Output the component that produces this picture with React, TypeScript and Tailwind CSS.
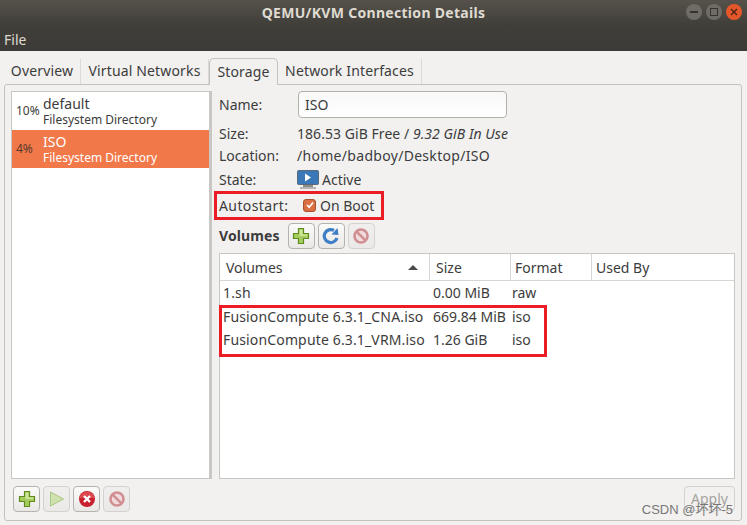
const font = { fontFamily: '"Noto Sans", sans-serif' };

function Plus() {
  return (
    <svg width="18" height="18" viewBox="0 0 18 18">
      <path d="M6.5 1.5h5v5h5v5h-5v5h-5v-5h-5v-5h5z" fill="#a5cc5c" stroke="#5f8a1e" strokeWidth="1.2" />
      <path d="M7.5 2.7h3v4.8h4.8v1.5H7.5z" fill="#cde69a" />
    </svg>
  );
}

function Refresh() {
  return (
    <svg width="18" height="18" viewBox="0 0 18 18">
      <path d="M15 11a6.5 6.5 0 1 1-3-7.6" fill="none" stroke="#3f7fc6" strokeWidth="3.2" />
      <path d="M9.5 7.5 16.5 8 15.5 1z" fill="#3f7fc6" />
    </svg>
  );
}

function Stop() {
  return (
    <svg width="18" height="18" viewBox="0 0 18 18">
      <circle cx="9" cy="9" r="6.5" fill="#f0dcdc" stroke="#d28f92" strokeWidth="2.6" />
      <path d="M4.6 4.6l8.8 8.8" stroke="#d28f92" strokeWidth="2.6" />
    </svg>
  );
}

function Play() {
  return (
    <svg width="18" height="18" viewBox="0 0 18 18">
      <path d="M2.5 2l13 7-13 7z" fill="#cfe2ae" stroke="#a9c784" strokeWidth="1" />
    </svg>
  );
}

function Delete() {
  return (
    <svg width="18" height="18" viewBox="0 0 18 18">
      <circle cx="9" cy="9" r="8" fill="#c8202e" />
      <path d="M1.5 8a7.6 7.6 0 0 1 15 0z" fill="#dc4a50" />
      <path d="M6 6l6 6M12 6l-6 6" stroke="#fff" strokeWidth="2.4" />
    </svg>
  );
}

function ToolButton({ children, dim }: { children: React.ReactNode; dim?: boolean }) {
  return (
    <div
      className={`flex h-[26px] w-[27px] items-center justify-center rounded-[4px] border bg-gradient-to-b ${
        dim ? "border-[#d4d2cf] from-[#f0efee] to-[#eae9e7]" : "border-[#b6b3ae] from-[#fbfbfa] to-[#e9e8e6]"
      }`}
    >
      {children}
    </div>
  );
}

const volumes = [
  { name: "1.sh", size: "0.00 MiB", format: "raw" },
  { name: "FusionCompute 6.3.1_CNA.iso", size: "669.84 MiB", format: "iso" },
  { name: "FusionCompute 6.3.1_VRM.iso", size: "1.26 GiB", format: "iso" },
];

export default function App() {
  return (
    <div style={font} className="relative flex h-[525px] w-[747px] flex-col overflow-hidden bg-[#f2f1f0] text-[14px] text-[#3c3c3c]">
      {/* Title bar + menu */}
      <div className="h-[51px] shrink-0 bg-gradient-to-b from-[#56524b] via-[#403e39] to-[#3d3b37]">
        <div className="relative flex h-[24px] items-center justify-center text-[14px] font-bold tracking-[0.3px] text-[#dfdbd2]">
          QEMU/KVM Connection Details
          <div className="absolute right-[5px] top-[4px] flex gap-[4px]">
            <div className="flex h-[16px] w-[16px] items-center justify-center rounded-full bg-[#6f6c66] text-[#3b3a36]">
              <div className="h-[1.5px] w-[8px] bg-[#35332f]" />
            </div>
            <div className="flex h-[16px] w-[16px] items-center justify-center rounded-full bg-[#6f6c66]">
              <div className="h-[8px] w-[8px] border border-[#35332f]" />
            </div>
            <div className="flex h-[16px] w-[16px] items-center justify-center rounded-full bg-[#e4572a]">
              <svg width="8" height="8" viewBox="0 0 8 8">
                <path d="M1 1l6 6M7 1L1 7" stroke="#4a2414" strokeWidth="1.4" />
              </svg>
            </div>
          </div>
        </div>
        <div className="flex h-[27px] items-center pl-[4px] pt-[4px] text-[#dfdbd2]">File</div>
      </div>

      {/* Tabs */}
      <div className="flex h-[33px] shrink-0 items-end pl-[4px] tracking-[0.15px]">
        <div className="flex h-[25px] w-[77px] items-center justify-center border-r border-[#dcdad7] pb-[2px]">Overview</div>
        <div className="flex h-[25px] w-[128px] items-center justify-center border-r border-[#dcdad7] pb-[2px]">Virtual Networks</div>
        <div className="z-10 -mb-px flex h-[27px] w-[69px] items-center justify-center rounded-t-[5px] border border-b-0 border-[#c4c2bf] bg-[#f2f1f0] pb-[1px]">Storage</div>
        <div className="flex h-[25px] w-[144px] items-center justify-center border-r border-[#dcdad7] pb-[2px]">Network Interfaces</div>
      </div>

      {/* Notebook */}
      <div className="mb-[4px] ml-[4px] mr-[5px] flex flex-1 gap-[7px] rounded-[3px] border border-[#c4c2bf] p-[6px]">
        {/* Pool list */}
        <div className="flex w-[201px] shrink-0 flex-col">
          <div className="h-[388px] border border-r-[3px] border-[#c9c7c4] bg-white">
            <div className="flex h-[38px] items-center pl-[4px]">
              <span className="w-[27px] text-[12px]">10%</span>
              <div className="pt-[2px] leading-[16px]">
                <div>default</div>
                <div className="text-[12px]">Filesystem Directory</div>
              </div>
            </div>
            <div className="flex h-[38px] items-center bg-[#f17849] pl-[4px] text-white">
              <span className="w-[27px] text-[12px] text-[#5a3a2c]">4%</span>
              <div className="pt-[2px] leading-[16px]">
                <div>ISO</div>
                <div className="text-[12px]">Filesystem Directory</div>
              </div>
            </div>
          </div>
          <div className="mt-[7px] flex gap-[3px] pl-[2px]">
            <ToolButton><Plus /></ToolButton>
            <ToolButton dim><Play /></ToolButton>
            <ToolButton><Delete /></ToolButton>
            <ToolButton dim><Stop /></ToolButton>
          </div>
        </div>

        {/* Details */}
        <div className="flex min-w-0 flex-1 flex-col">
          <div className="flex items-center">
            <span className="w-[79px] shrink-0">Name:</span>
            <div className="flex h-[27px] w-[209px] items-center rounded-[4px] border border-[#b3b0ab] bg-gradient-to-b from-[#f8f8f8] to-white pl-[6px]">ISO</div>
          </div>
          <div className="mt-[3px] flex flex-col">
            <div className="flex h-[24px] items-center">
              <span className="w-[78px] shrink-0">Size:</span>
              <span className="tracking-[0.05px]">186.53 GiB Free / <i>9.32 GiB In Use</i></span>
            </div>
            <div className="flex h-[21px] items-center">
              <span className="w-[78px] shrink-0">Location:</span>
              <span className="tracking-[0.3px]">/home/badboy/Desktop/ISO</span>
            </div>
            <div className="mt-[1px] flex h-[24px] items-center">
              <span className="w-[78px] shrink-0">State:</span>
              <svg width="22" height="19" viewBox="0 0 22 19" className="mr-[3px]">
                <rect x="0.5" y="0.5" width="21" height="14" rx="1" fill="#3a78b8" stroke="#5a6a78" />
                <path d="M8 3.5l6 4-6 4z" fill="#fff" />
                <rect x="6" y="15" width="10" height="2" fill="#8a8a86" />
                <rect x="3" y="17" width="16" height="2" fill="#b5b4b0" />
              </svg>
              <span>Active</span>
            </div>
            <div className="mt-[1px] flex h-[26px] items-center">
              <span className="w-[84px] shrink-0 tracking-[0.4px]">Autostart:</span>
              <div className="mr-[4px] flex h-[13px] w-[13px] items-center justify-center rounded-[3px] border border-[#a8522c] bg-[#d96f42]">
                <svg width="10" height="10" viewBox="0 0 10 10">
                  <path d="M2 5l2.2 2.2L8 2.5" fill="none" stroke="#fff" strokeWidth="1.7" />
                </svg>
              </div>
              <span>On Boot</span>
            </div>
          </div>
          <div className="mt-[4px] flex h-[27px] items-center gap-[3px]">
            <b className="mr-[5px] tracking-[0.1px]">Volumes</b>
            <ToolButton><Plus /></ToolButton>
            <ToolButton><Refresh /></ToolButton>
            <ToolButton dim><Stop /></ToolButton>
          </div>
          {/* Volume table */}
          <div className="mt-[4px] h-[226px] border border-[#c9c7c4] bg-white">
            <div className="flex h-[27px] border-b border-[#d8d6d3]">
              <div className="flex w-[210px] items-center justify-between border-r border-[#d8d6d3] px-[6px]">
                Volumes
                <span className="mr-[5px] h-0 w-0 border-x-[5px] border-b-[5px] border-x-transparent border-b-[#4a4a4a]" />
              </div>
              <div className="flex w-[81px] items-center border-r border-[#d8d6d3] px-[6px]">Size</div>
              <div className="flex w-[81px] items-center border-r border-[#d8d6d3] px-[4px]">Format</div>
              <div className="flex flex-1 items-center px-[4px]">Used By</div>
            </div>
            {volumes.map((v) => (
              <div key={v.name} className="flex h-[23.5px] items-center">
                <div className="w-[210px] whitespace-nowrap pl-[3px] tracking-[0.15px]">{v.name}</div>
                <div className="w-[81px] whitespace-nowrap pl-[3px]">{v.size}</div>
                <div className="pl-[1px]">{v.format}</div>
              </div>
            ))}
          </div>
          <div className="mt-[7px] flex justify-end">
            <div className="flex h-[25px] w-[51px] items-center justify-center rounded-[4px] border border-[#d4d2cf] text-[#a5a3a0]">Apply</div>
          </div>
        </div>
      </div>

      {/* Red annotation boxes drawn on the screenshot */}
      <div className="absolute left-[214px] top-[191px] h-[29px] w-[170px] border-[3px] border-[#ec1c24]" />
      <div className="absolute left-[219px] top-[305px] h-[52px] w-[328px] border-[3px] border-[#ec1c24]" />

      {/* Watermark */}
      <div
        style={{ fontFamily: '"Liberation Sans", "Noto Sans CJK SC", sans-serif' }}
        className="absolute bottom-[7px] right-[14px] text-[13px] leading-[16px] text-[#777777]"
      >
        CSDN @坏坏-5
      </div>
    </div>
  );
}
